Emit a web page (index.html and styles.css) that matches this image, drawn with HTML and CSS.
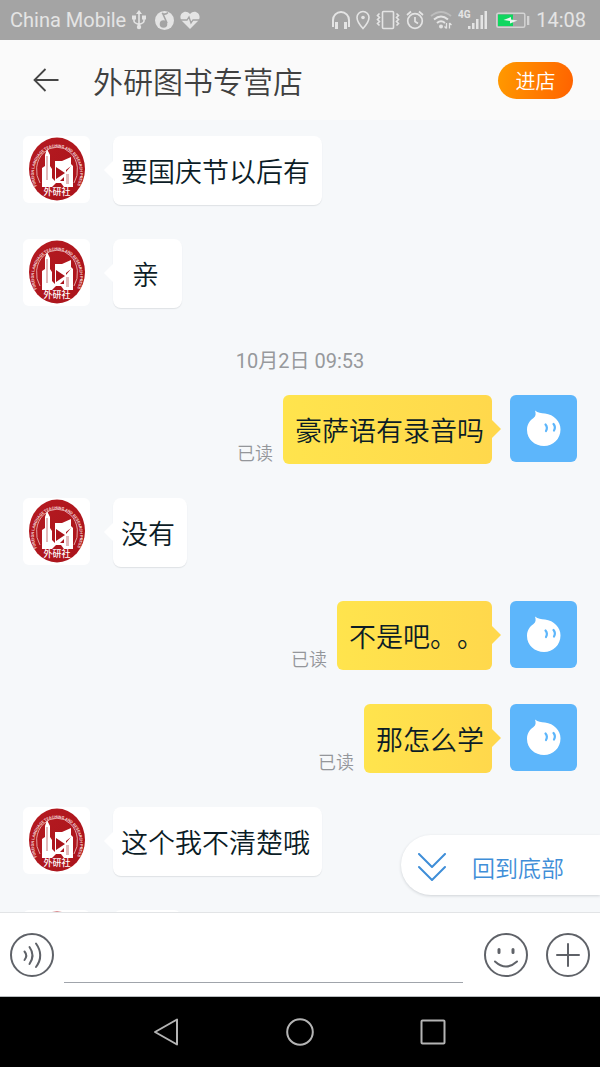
FILE: index.html
```html
<!DOCTYPE html>
<html lang="zh-CN">
<head>
<meta charset="utf-8">
<meta name="viewport" content="width=device-width, initial-scale=1">
<title>外研图书专营店</title>
<link rel="stylesheet" href="styles.css">
</head>
<body>
<svg class="sprite" aria-hidden="true">
  <defs>
    <linearGradient id="seal-red" x1="0" y1="0" x2="1" y2="1">
      <stop offset="0" stop-color="#b51a20"/><stop offset="1" stop-color="#aa141c"/>
    </linearGradient>
    <symbol id="shop-logo" viewBox="0 0 67 67">
      <ellipse cx="34" cy="33" rx="28" ry="31.500" fill="url(#seal-red)"/>
      <path d="M17 47A20.500 23 0 1 1 51 47" fill="none" stroke="#e8b5b5" stroke-width="0.900"/>
      <path id="seal-arc" d="M14 50A23 26 0 1 1 54 50" fill="none"/>
      <text class="seal-ring"><textPath href="#seal-arc">FOREIGN LANGUAGE TEACHING AND RESEARCH PRESS</textPath></text>
      <path fill="#fff" d="M19 51V32l3-2V19l2-6 3 6v11l2 3v9l3 3V25h7l9-4v7l2 2v21h-9l-3-4h-5l-4 4z"/>
      <path fill="#a9131b" d="M33 31v12l9-6zM48 30l-5 4v2zM37 45l4-4v4z"/>
      <path fill="#e3b9ba" d="M43 38h3v10h-3zM23 20h2v24h-2z"/>
      <text class="seal-name" x="34" y="59">外研社</text>
    </symbol>
    <symbol id="user-avatar" viewBox="0 0 67 67">
      <path fill="#fff" d="M25 15.500c3 2.500 6 2.500 10 3 9 1 15.500 8 15.500 16C50.500 44 43 51 34 51S17 44.500 17 35c0-6 3-9.500 6.500-12 2.500-2 2.500-4.500 1.500-7.500z"/>
      <path fill="none" stroke="#5db6fb" stroke-width="2.200" stroke-linecap="round" d="M35.500 29.500q2.500 3 .5 6.500M43.500 29q2.500 3 .5 6.500"/>
    </symbol>
  </defs>
</svg>

<div class="phone">
  <div class="status">
    <div class="status-group">
      <span>China Mobile</span>
      <svg width="17" height="20" viewBox="0 0 17 20" fill="none" stroke="currentColor" stroke-width="1.600"><path d="M7 3v13M2 8v3q0 2 5 3.500 5-1.500 5-3.500V7"/><path fill="currentColor" stroke="none" d="M7 0l3 4H4zM0 5.500h4v4H0zM10 5.500h4v4h-4z"/><circle cx="7" cy="17" r="2.200" fill="currentColor" stroke="none"/></svg>
      <svg width="19" height="20" viewBox="0 0 19 20"><circle cx="9.500" cy="10.500" r="9.500" fill="currentColor"/><path d="M7 3q3 2.500 6-.5M7.500 3L12 13" fill="none" stroke="#a4a4a4" stroke-width="1.600"/><circle cx="8.500" cy="14" r="3.800" fill="#a4a4a4"/></svg>
      <svg width="20" height="20" viewBox="0 0 20 20"><path fill="currentColor" d="M10 19L2 11C-3 5 5-2 10 4c5-6 13 1 8 7z"/><path d="M1 10h6l2-3 2 6 2-3h6" fill="none" stroke="#a4a4a4" stroke-width="1.300"/></svg>
    </div>
    <div class="status-group">
      <svg width="18" height="20" viewBox="0 0 18 20" fill="none" stroke="currentColor" stroke-width="2"><path d="M1 17V10a8 8 0 0 1 16 0v7"/><path stroke-width="3" d="M4.500 12v7M13.500 12v7"/></svg>
      <svg width="14" height="20" viewBox="0 0 14 20" fill="none" stroke="currentColor" stroke-width="1.600"><path d="M7 18.500Q1 12 1 7.500a6 6 0 0 1 12 0Q13 12 7 18.500z"/><circle cx="7" cy="7.500" r="1.800" fill="currentColor" stroke="none"/></svg>
      <svg width="24" height="20" viewBox="0 0 24 20" fill="none" stroke="currentColor" stroke-width="1.600"><rect x="6.500" y="1.500" width="11" height="17" rx="1"/><path d="M3.500 3.500l-2 2 2 2-2 2 2 2-2 2 2 2M20.500 3.500l2 2-2 2 2 2-2 2 2 2-2 2"/></svg>
      <svg width="18" height="20" viewBox="0 0 18 20" fill="none" stroke="currentColor" stroke-width="1.700"><circle cx="9" cy="11" r="7.300"/><path d="M9 7v4.500l3 2M1 5l4-3.500M17 5l-4-3.500"/></svg>
      <svg width="22" height="20" viewBox="0 0 22 20" fill="none" stroke="currentColor" stroke-width="2"><path opacity=".4" d="M1 6q10-8 20 0"/><path d="M4 9.500q7-6 14 0M7 13q4-3.500 8 0"/><circle cx="11" cy="16.500" r="2" fill="currentColor" stroke="none"/><path stroke-width="1.300" d="M16.500 13v5.500M16.500 18.500l-2-2M19.500 18.500V13M19.500 13l2 2"/></svg>
      <svg width="32" height="20" viewBox="0 0 32 20" fill="currentColor"><text class="net" x="0" y="8">4G</text><path d="M10 16h2.500v3H10zM14 13h2.500v6H14zM18 9h2.500v10H18zM22.500 5H25v14h-2.500zM26.500 1H29v18h-2.500z"/></svg>
      <svg width="34" height="20" viewBox="0 0 34 20"><rect x="0.800" y="3.300" width="28" height="14" rx="1.500" fill="none" stroke="#d3d3d3" stroke-width="1.500"/><path fill="#0fd75f" d="M2 4.500h15v11.600H2z"/><path fill="#d3d3d3" d="M31 6h2.300v9H31z"/><path fill="#e9f6ee" d="M7.500 10L15 7v2.500l6.500 1L14 13.500V11z"/></svg>
      <time>14:08</time>
    </div>
  </div>

  <header class="header">
    <button class="icon-button" type="button" aria-label="返回">
      <svg width="26" height="24" viewBox="0 0 26 24" fill="none" stroke="#464646" stroke-width="1.800"><path d="M25.500 12H1.500M12.500 1L1.500 12l11 11"/></svg>
    </button>
    <h1 class="title">外研图书专营店</h1>
    <button class="enter" type="button">进店</button>
  </header>

  <main class="chat">
    <ol class="messages">
      <li class="message">
        <svg class="avatar" role="img" aria-label="外研社"><use href="#shop-logo"/></svg>
        <p class="bubble">要国庆节以后有</p>
      </li>
      <li class="message">
        <svg class="avatar" role="img" aria-label="外研社"><use href="#shop-logo"/></svg>
        <p class="bubble">亲</p>
      </li>
      <li class="date"><time>10月2日 09:53</time></li>
      <li class="message mine">
        <span class="read">已读</span>
        <p class="bubble">豪萨语有录音吗</p>
        <svg class="avatar" role="img" aria-label="我"><use href="#user-avatar"/></svg>
      </li>
      <li class="message">
        <svg class="avatar" role="img" aria-label="外研社"><use href="#shop-logo"/></svg>
        <p class="bubble">没有</p>
      </li>
      <li class="message mine">
        <span class="read">已读</span>
        <p class="bubble">不是吧。。</p>
        <svg class="avatar" role="img" aria-label="我"><use href="#user-avatar"/></svg>
      </li>
      <li class="message mine">
        <span class="read">已读</span>
        <p class="bubble">那怎么学</p>
        <svg class="avatar" role="img" aria-label="我"><use href="#user-avatar"/></svg>
      </li>
      <li class="message">
        <svg class="avatar" role="img" aria-label="外研社"><use href="#shop-logo"/></svg>
        <p class="bubble">这个我不清楚哦</p>
      </li>
      <li class="message">
        <svg class="avatar" role="img" aria-label="外研社"><use href="#shop-logo"/></svg>
        <p class="bubble"></p>
      </li>
    </ol>
    <button class="to-bottom" type="button">
      <svg width="28" height="28" viewBox="0 0 28 28" fill="none" stroke="#3f8ed8" stroke-width="2" stroke-linecap="round" stroke-linejoin="round"><path d="M1 1l13 13L27 1M1 14l13 13 13-13"/></svg>
      回到底部
    </button>
  </main>

  <form class="composer">
    <button class="icon-button" type="button" aria-label="语音">
      <svg width="44" height="44" viewBox="0 0 44 44" fill="none" stroke="#5f6268" stroke-width="2" stroke-linecap="round"><circle cx="22" cy="22" r="21"/><path d="M14.500 18.500q3.500 4 0 8.500M19.500 14q6 8.500 0 17M26 10.500q8.500 12 0 23.500"/></svg>
    </button>
    <input class="field" type="text" aria-label="消息">
    <button class="icon-button smile" type="button" aria-label="表情">
      <svg width="44" height="44" viewBox="0 0 44 44" fill="none" stroke="#5f6268" stroke-width="2" stroke-linecap="round"><circle cx="22" cy="22" r="21"/><path d="M11 28.500q11 10 22 0"/><path stroke-width="3" d="M15 16.500v3M29 16.500v3"/></svg>
    </button>
    <button class="icon-button" type="button" aria-label="更多">
      <svg width="44" height="44" viewBox="0 0 44 44" fill="none" stroke="#5f6268" stroke-width="2" stroke-linecap="round"><circle cx="22" cy="22" r="21"/><path d="M22 11v22M11 22h22"/></svg>
    </button>
  </form>

  <nav class="navbar" aria-label="系统导航">
    <button class="icon-button" type="button" aria-label="后退">
      <svg width="28" height="28" viewBox="0 0 28 28" fill="none" stroke="#b4b4b4" stroke-width="2" stroke-linejoin="round"><path d="M24 1.500v25L2 14z"/></svg>
    </button>
    <button class="icon-button" type="button" aria-label="主页">
      <svg width="28" height="28" viewBox="0 0 28 28" fill="none" stroke="#b4b4b4" stroke-width="2"><circle cx="14" cy="14" r="12.800"/></svg>
    </button>
    <button class="icon-button" type="button" aria-label="最近任务">
      <svg width="28" height="28" viewBox="0 0 28 28" fill="none" stroke="#b4b4b4" stroke-width="2"><rect x="2.500" y="2.500" width="23" height="23" rx="1"/></svg>
    </button>
  </nav>
</div>
</body>
</html>
```

FILE: styles.css
```css
* {
  box-sizing: border-box;
}

body {
  margin: 0;
  font-family: Roboto, "Noto Sans CJK SC", sans-serif;
  text-spacing-trim: space-all;
  color: #0b1c26;
}

button,
input {
  font: inherit;
}

button {
  border: 0;
  padding: 0;
  cursor: pointer;
}

svg {
  display: block;
  flex: none;
}

.sprite {
  position: absolute;
  width: 0;
  height: 0;
}

.phone {
  display: flex;
  flex-direction: column;
  height: 100vh;
  background: #f6f8fa;
}

.status {
  display: flex;
  justify-content: space-between;
  align-items: center;
  padding: 0 14px 0 10px;
  font-size: 20px;
  line-height: 40px;
  color: #e4e4e4;
  background: #a4a4a4;
}

.status-group {
  display: flex;
  align-items: center;
  gap: 6px;
}

.net {
  font-size: 10px;
  font-weight: 700;
}

.icon-button {
  display: block;
  background: none;
}

.header {
  display: flex;
  align-items: center;
  padding: 0 27px 0 33px;
  height: 80px;
  background: #fafafa;
}

.title {
  flex: 1;
  margin: 0 0 0 34px;
  font-size: 30px;
  font-weight: 350;
  color: #404040;
}

.enter {
  width: 75px;
  height: 37px;
  border-radius: 19px;
  font-size: 20px;
  font-weight: 350;
  color: #fff;
  background: linear-gradient(100deg, #ff9a00, #ff6200);
}

.chat {
  position: relative;
  flex: 1;
  min-height: 0;
  overflow: hidden;
}

.messages {
  margin: 0;
  padding: 16px 23px 0;
  list-style: none;
}

.message {
  display: flex;
  gap: 23px;
  margin-bottom: 34px;
}

.avatar {
  width: 67px;
  height: 67px;
  border-radius: 6px;
  background: #fff;
}

.seal-ring {
  font-size: 4px;
  font-weight: 700;
  fill: #f3d5d5;
}

.seal-name {
  font-size: 9px;
  font-weight: 500;
  text-anchor: middle;
  fill: #fff;
}

.bubble {
  position: relative;
  min-width: 69px;
  height: 69px;
  margin: 0;
  padding: 4px 12px 0 8px;
  border-radius: 8px;
  font-size: 27px;
  font-weight: 350;
  line-height: 67px;
  text-align: center;
  background: #fff;
  box-shadow: 0 1px 1px #dfe2e5;
}

.bubble::before {
  content: "";
  position: absolute;
  top: 24px;
  left: -9px;
  border: solid transparent;
  border-width: 10px 10px 10px 0;
  border-right-color: #fff;
}

.mine {
  justify-content: flex-end;
  gap: 18px;
}

.mine .avatar {
  background: #5db6fb;
}

.mine .bubble {
  padding: 4px 8px 0 12px;
  border-radius: 6px;
  background: linear-gradient(90deg, #ffe44d, #ffd84c);
  box-shadow: none;
}

.mine .bubble::before {
  right: -9px;
  left: auto;
  border-width: 10px 0 10px 10px;
  border-color: transparent transparent transparent #ffd84c;
}

.read {
  align-self: flex-end;
  margin-right: -8px;
  font-size: 18px;
  font-weight: 350;
  line-height: 20px;
  color: #94969a;
}

.date {
  padding: 7px 0 22px;
  font-size: 20px;
  line-height: 24px;
  text-align: center;
  color: #97999c;
}

.to-bottom {
  position: absolute;
  right: 0;
  bottom: 17px;
  display: flex;
  align-items: center;
  gap: 26px;
  height: 60px;
  padding: 4px 36px 0 17px;
  border-radius: 30px 0 0 30px;
  font-size: 23px;
  font-weight: 350;
  color: #3f8ed8;
  background: #fff;
  box-shadow: 0 1px 3px #cfd3d7;
}

.composer {
  display: flex;
  align-items: center;
  height: 85px;
  padding: 0 10px;
  border: solid #e2e4e6;
  border-width: 1px 0;
  border-bottom-color: #b9bdc0;
  background: #fff;
}

.field {
  flex: 1;
  min-width: 0;
  height: 56px;
  margin-left: 10px;
  border: 0;
  border-bottom: 1px solid #a0a4ab;
  outline: 0;
  font-size: 27px;
  background: transparent;
}

.smile {
  margin: 0 18px 0 21px;
}

.navbar {
  display: flex;
  justify-content: center;
  align-items: center;
  gap: 105px;
  height: 70px;
  background: #000;
}
```
